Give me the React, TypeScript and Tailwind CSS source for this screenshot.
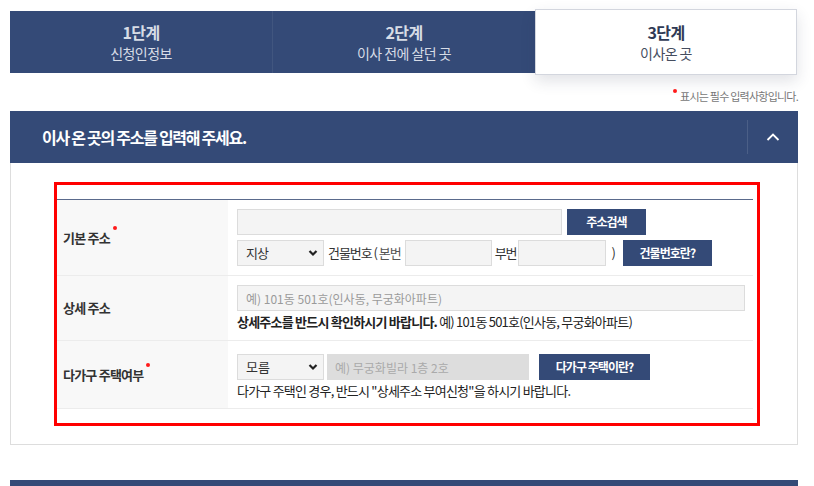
import React from 'react';

const Chevron = () => (
  <svg width="10" height="7" viewBox="0 0 10 7" className="absolute right-[6px] top-1/2 -translate-y-1/2 pointer-events-none">
    <polyline points="1.5,1.5 5,5 8.5,1.5" fill="none" stroke="#222" strokeWidth="2.2" />
  </svg>
);

const Select = ({ value }: { value: string }) => (
  <div className="relative w-[87px] h-[26px] shrink-0">
    <select
      defaultValue={value}
      className="appearance-none w-full h-full bg-[#f4f4f4] border border-[#dcdcdc] pl-[8px] text-[13px] text-[#333] outline-none"
    >
      <option>{value}</option>
    </select>
    <Chevron />
  </div>
);

const Btn = ({ children, w }: { children: React.ReactNode; w: string }) => (
  <button className={`${w} h-[26px] shrink-0 bg-[#344a77] text-white text-[12px] font-bold tracking-[-0.08em] flex items-center justify-center`}>
    {children}
  </button>
);

const Dot = () => (
  <span className="relative inline-block w-[6px] h-[6px] ml-[2px] -top-[9px]">
    <span className="absolute left-[1px] top-0 w-[4px] h-[4px] rounded-full bg-[#ff1a1a]" />
  </span>
);

const Label = ({ children, dot }: { children: React.ReactNode; dot?: boolean }) => (
  <div className="w-[171px] bg-[#f8f8f8] flex items-center pl-[6px] text-[13px] font-bold text-[#333] tracking-[-0.06em] whitespace-pre">
    <span>{children}</span>
    {dot && <Dot />}
  </div>
);

export default function App() {
  return (
    <div className="w-[814px] h-[486px] overflow-hidden bg-white font-['Noto_Sans_CJK_KR',sans-serif]">
      <div className="pl-[10px] w-[798px] pt-[9px]">
        {/* tabs */}
        <div className="flex items-center h-[66px]">
          <div className="w-[262px] h-[62px] bg-[#344a77] flex flex-col items-center justify-center leading-none">
            <div className="text-[16px] font-bold text-[#d7dce6] tracking-[-0.04em]">1단계</div>
            <div className="mt-[6px] text-[14px] text-[#d7dce6] tracking-[-0.04em]">신청인정보</div>
          </div>
          <div className="w-[263px] h-[62px] bg-[#344a77] border-l border-[#41567f] flex flex-col items-center justify-center leading-none">
            <div className="text-[16px] font-bold text-[#d7dce6] tracking-[-0.04em]">2단계</div>
            <div className="mt-[6px] text-[14px] text-[#d7dce6] tracking-[-0.04em]">이사 전에 살던 곳</div>
          </div>
          <div className="flex-1 mr-[1px] h-[66px] bg-white border border-[#d3d6de] shadow-[0_6px_14px_rgba(40,50,80,0.14)] flex flex-col items-center justify-center leading-none">
            <div className="text-[16px] font-bold text-[#2f3a55] tracking-[-0.04em]">3단계</div>
            <div className="mt-[6px] text-[14px] text-[#454d5f] tracking-[-0.04em]">이사온 곳</div>
          </div>
        </div>

        {/* required note */}
        <div className="mt-[14px] h-[14px] flex justify-end items-center text-[11px] text-[#777] tracking-[-0.07em] leading-none">
          <span className="relative w-[8px] h-[11px]">
            <span className="absolute left-[1px] top-[-2px] w-[4px] h-[4px] rounded-full bg-[#ff1a1a]" />
          </span>
          <span>표시는 필수 입력사항입니다.</span>
        </div>

        {/* header */}
        <div className="mt-[8px] h-[52px] bg-[#344a77] flex items-center">
          <div className="flex-1 pl-[32px] text-[16px] font-bold text-white tracking-[-0.08em]">이사 온 곳의 주소를 입력해 주세요.</div>
          <div className="w-[51px] h-full flex items-center">
            <div className="w-px h-[34px] bg-[#4b5f87]" />
            <div className="flex-1 flex items-center justify-center">
              <svg width="14" height="8" viewBox="0 0 14 8">
                <polyline points="1.5,7 7,1.5 12.5,7" fill="none" stroke="#fff" strokeWidth="1.8" />
              </svg>
            </div>
          </div>
        </div>

        {/* body */}
        <div className="border border-t-0 border-[#dddddd] pl-[43px] pr-[37px] pt-[19px] pb-[18px]">
          <div className="border-[3px] border-[#ff0000] pt-[14px] pb-[14px] pr-[4px]">
            <div className="border-t border-[#5a6a8c]">
              {/* row 1 */}
              <div className="flex border-b border-[#ececec]">
                <Label dot>기본 주소</Label>
                <div className="flex-1 pl-[9px] pt-[9px] pb-[9px] text-[13px] text-[#333]">
                  <div className="flex items-center">
                    <input className="w-[325px] h-[26px] bg-[#f4f4f4] border border-[#dcdcdc] outline-none" />
                    <div className="ml-[5px]"><Btn w="w-[79px]">주소검색</Btn></div>
                  </div>
                  <div className="mt-[5px] flex items-center tracking-[-0.08em] whitespace-pre">
                    <Select value="지상" />
                    <span className="ml-[4px]">건물번호 ( </span>
                    <span className="text-[#555]">본번</span>
                    <input className="ml-[4px] w-[87px] h-[26px] bg-[#f4f4f4] border border-[#dcdcdc] outline-none" />
                    <span className="ml-[3px]">부번</span>
                    <input className="ml-[2px] w-[88px] h-[26px] bg-[#f4f4f4] border border-[#dcdcdc] outline-none" />
                    <span className="ml-[5px]">)</span>
                    <div className="ml-[8px]"><Btn w="w-[89px]">건물번호란?</Btn></div>
                  </div>
                </div>
              </div>
              {/* row 2 */}
              <div className="flex border-b border-[#ececec]">
                <Label>상세 주소</Label>
                <div className="flex-1 pl-[9px] pt-[9px] pb-[9px] text-[13px] text-[#222]">
                  <input
                    placeholder="예) 101동 501호(인사동, 무궁화아파트)"
                    className="w-[508px] h-[26px] bg-[#f4f4f4] border border-[#dcdcdc] pl-[8px] text-[12px] placeholder:text-[#9a9a9a] outline-none"
                  />
                  <div className="mt-[2px] leading-[18px] tracking-[-0.06em]">
                    <span className="font-bold">상세주소를 반드시 확인하시기 바랍니다.</span>
                    <span> 예) 101동 501호(인사동, 무궁화아파트)</span>
                  </div>
                </div>
              </div>
              {/* row 3 */}
              <div className="flex border-b border-[#ececec]">
                <Label dot>다가구 주택여부</Label>
                <div className="flex-1 pl-[9px] pt-[13px] pb-[8px] text-[13px] text-[#222]">
                  <div className="flex items-center">
                    <Select value="모름" />
                    <input
                      disabled
                      placeholder="예) 무궁화빌라 1층 2호"
                      className="ml-[3px] w-[202px] h-[26px] bg-[#dddddd] border border-[#dddddd] pl-[7px] text-[12px] placeholder:text-[#aaaaaa] outline-none"
                    />
                    <div className="ml-[10px]"><Btn w="w-[111px]">다가구 주택이란?</Btn></div>
                  </div>
                  <div className="mt-[2px] leading-[18px] tracking-[-0.06em]">
                    다가구 주택인 경우, 반드시 "상세주소 부여신청"을 하시기 바랍니다.
                  </div>
                </div>
              </div>
            </div>
          </div>
        </div>

        {/* next section header */}
        <div className="mt-[35px] h-[52px] bg-[#344a77]" />
      </div>
    </div>
  );
}
